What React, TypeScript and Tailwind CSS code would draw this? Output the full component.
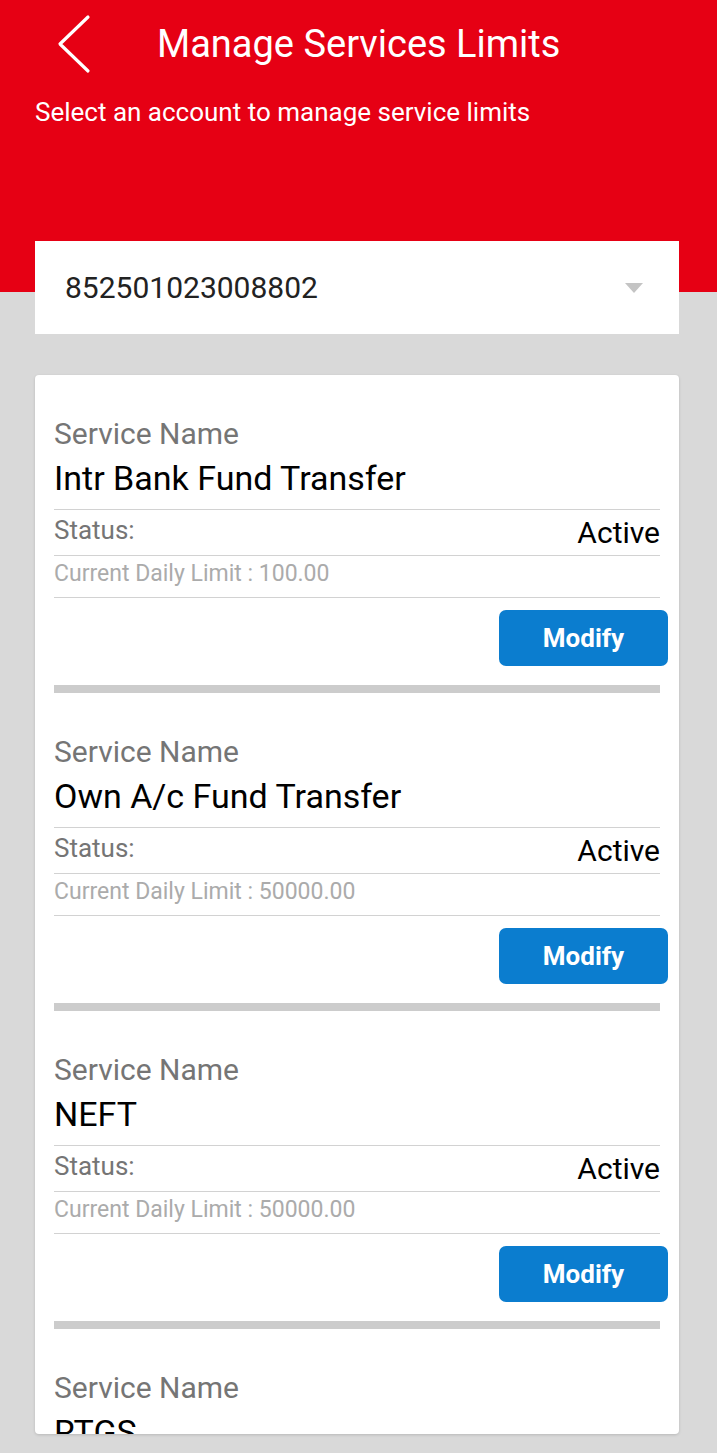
import React from 'react';

const services = [
  { name: 'Intr Bank Fund Transfer', status: 'Active', limit: '100.00' },
  { name: 'Own A/c Fund Transfer', status: 'Active', limit: '50000.00' },
  { name: 'NEFT', status: 'Active', limit: '50000.00' },
  { name: 'RTGS', status: 'Active', limit: '50000.00' },
];

const ServiceBlock = ({ name, status, limit }: { name: string; status: string; limit: string }) => {
  return (
    <div className="px-[19px] pt-[42px]">
      <div className="text-[30px] leading-[34px] text-[#757575]">Service Name</div>
      <div className="mt-[7px] border-b border-[#d2d2d2] pb-[11px] text-[34px] leading-[40px] text-black">
        {name}
      </div>
      <div className="flex h-[46px] items-center justify-between border-b border-[#d2d2d2]">
        <span className="pb-[6px] text-[26px] leading-[30px] text-[#757575]">Status:</span>
        <span className="text-[30px] leading-[34px] text-black">{status}</span>
      </div>
      <div className="flex h-[42px] items-center border-b border-[#d2d2d2] pb-[6px] text-[23px] leading-[28px] text-[#ababab]">
        Current Daily Limit : {limit}
      </div>
      <div className="-mr-[8px] flex justify-end pt-[12px]">
        <button className="h-[56px] w-[169px] rounded-[7px] bg-[#0b7dcf] text-[26px] font-bold text-white">
          Modify
        </button>
      </div>
      <div className="mt-[19px] h-[8px] bg-[#cccccc]" />
    </div>
  );
};

const App = () => {
  return (
    <div
      className="relative h-[1453px] w-[717px] overflow-hidden bg-[#d9d9d9]"
      style={{ fontFamily: 'Roboto, "Noto Sans", sans-serif' }}
    >
      {/* Red header */}
      <div className="h-[292px] bg-[#e60014]">
        <div className="flex h-[88px] items-center">
          <svg width="40" height="62" viewBox="0 0 40 62" className="ml-[54px]">
            <path d="M34 4 L6 31 L34 58" fill="none" stroke="#fff" strokeWidth="3.2" strokeLinecap="round" strokeLinejoin="round" />
          </svg>
          <h1 className="ml-[63px] text-[38px] leading-[44px] font-normal text-white">Manage Services Limits</h1>
        </div>
        <p className="ml-[35px] mt-[6px] text-[26px] leading-[36px] text-white">Select an account to manage service limits</p>
      </div>

      {/* Account dropdown */}
      <div className="relative -mt-[51px] ml-[35px] mr-[38px] flex h-[93px] items-center justify-between bg-white pl-[30px] pr-[36px]">
        <span className="text-[30px] leading-[36px] text-[#222]">852501023008802</span>
        <svg width="18" height="10" viewBox="0 0 18 10">
          <path d="M0 0 L18 0 L9 10 Z" fill="#c4c4c4" />
        </svg>
      </div>

      {/* Services card */}
      <div className="ml-[35px] mr-[38px] mt-[41px] h-[1059px] overflow-hidden rounded-[4px] bg-white shadow-[0_1px_3px_rgba(0,0,0,0.15)]">
        {services.map(s => (
          <ServiceBlock key={s.name} {...s} />
        ))}
      </div>
    </div>
  );
};

export default App;
